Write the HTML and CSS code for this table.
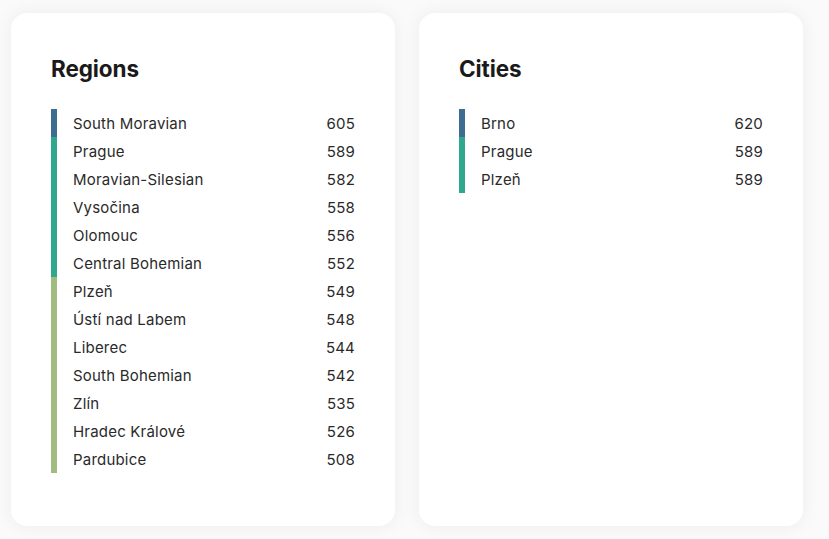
FILE: index.html
```html
<!DOCTYPE html>
<html lang="en">
<head>
    <meta charset="UTF-8">
    <meta name="viewport" content="width=device-width, initial-scale=1.0">
    <title>Regions and Cities</title>
    <link rel="stylesheet" href="styles.css">
</head>
<body>
    <div class="board">
        <div class="card">
            <h2 class="title">Regions</h2>
            <ul class="ranking">
                <li class="tier-1"><span>South Moravian</span><span>605</span></li>
                <li class="tier-2"><span>Prague</span><span>589</span></li>
                <li class="tier-2"><span>Moravian-Silesian</span><span>582</span></li>
                <li class="tier-2"><span>Vysočina</span><span>558</span></li>
                <li class="tier-2"><span>Olomouc</span><span>556</span></li>
                <li class="tier-2"><span>Central Bohemian</span><span>552</span></li>
                <li class="tier-3"><span>Plzeň</span><span>549</span></li>
                <li class="tier-3"><span>Ústí nad Labem</span><span>548</span></li>
                <li class="tier-3"><span>Liberec</span><span>544</span></li>
                <li class="tier-3"><span>South Bohemian</span><span>542</span></li>
                <li class="tier-3"><span>Zlín</span><span>535</span></li>
                <li class="tier-3"><span>Hradec Králové</span><span>526</span></li>
                <li class="tier-3"><span>Pardubice</span><span>508</span></li>
            </ul>
        </div>
        <div class="card">
            <h2 class="title">Cities</h2>
            <ul class="ranking">
                <li class="tier-1"><span>Brno</span><span>620</span></li>
                <li class="tier-2"><span>Prague</span><span>589</span></li>
                <li class="tier-2"><span>Plzeň</span><span>589</span></li>
            </ul>
        </div>
    </div>
</body>
</html>
```

FILE: styles.css
```css
html, body {
    margin: 0;
    background: #fafafa;
    font-family: "Inter", "Noto Sans", sans-serif;
    color: #222;
}

.board {
    display: grid;
    grid-template-columns: 384px 384px;
    gap: 24px;
    padding: 13px 11px;
}

.card {
    background: #fff;
    border-radius: 16px;
    box-shadow: 0 0 18px rgba(0, 0, 0, 0.06);
    padding: 40px 40px 53px;
    height: 420px;
}

.title {
    margin: 0 0 24px;
    font-size: 22.5px;
    line-height: 32px;
    font-weight: 700;
    color: #1a1a1a;
    letter-spacing: -0.1px;
}

.ranking {
    list-style: none;
    margin: 0;
    padding: 0;
}

.ranking li {
    display: flex;
    justify-content: space-between;
    align-items: center;
    height: 28px;
    padding-left: 22px;
    border-left: 6px solid;
    font-size: 15px;
    letter-spacing: 0.2px;
    color: #2a2a2a;
}

.ranking li span:first-child {
    margin-left: -6px;
}

.ranking .tier-1 {
    border-color: #3d6e91;
}
.ranking .tier-2 {
    border-color: #2fa88e;
}
.ranking .tier-3 {
    border-color: #a2bb80;
}
```
